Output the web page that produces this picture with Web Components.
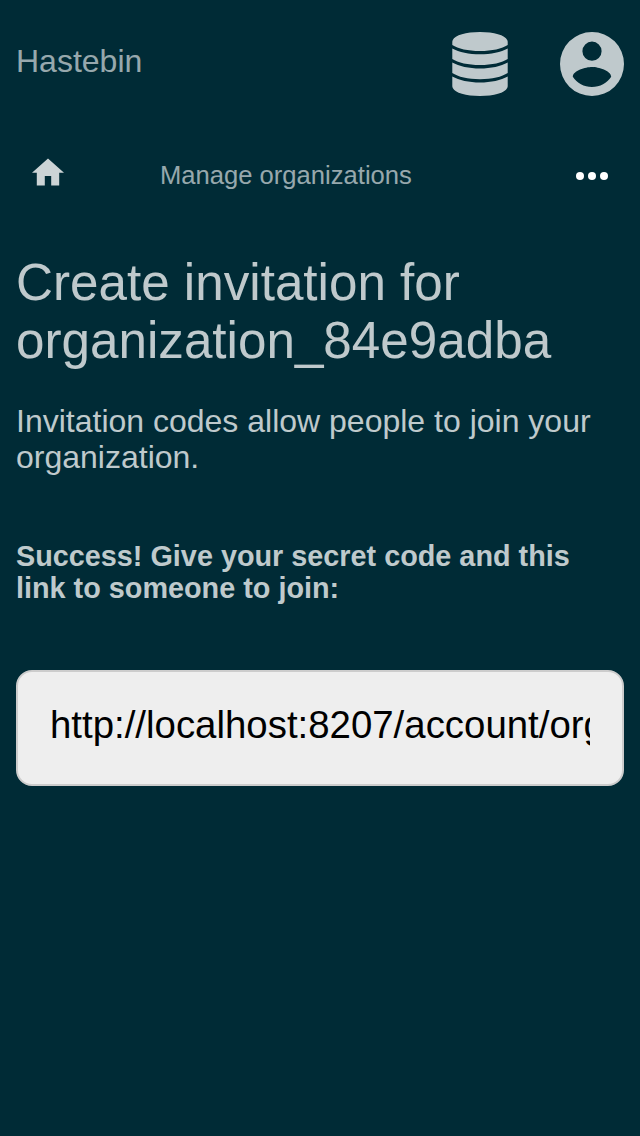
<!DOCTYPE html>
<html lang="en">
<head>
<meta charset="utf-8">
<title>Hastebin</title>
<style>
html, body { margin: 0; background: #002b36; }
body { font-family: "Liberation Sans", Arial, sans-serif; color: rgba(255,255,255,.75); }
</style>
</head>
<body>
<hb-app></hb-app>
<script>
function define(name, html) {
  const template = document.createElement('template');
  template.innerHTML = html;
  customElements.define(name, class extends HTMLElement {
    constructor() {
      super();
      this.attachShadow({ mode: 'open' }).append(template.content.cloneNode(true));
    }
  });
}

define('hb-header', `
<style>
:host { display: flex; height: 128px; padding: 0 16px; box-sizing: border-box; align-items: center; justify-content: space-between; }
.brand { font-size: 32px; line-height: 36px; color: rgba(255,255,255,.6); padding-bottom: 6px; }
.icons { display: flex; gap: 52px; }
svg { display: block; fill: rgba(255,255,255,.75); }
</style>
<div class="brand"><slot></slot></div>
<div class="icons">
  <svg width="56" height="64" viewBox="0 0 56 64" aria-hidden="true">
    <path d="M28 0C14 0 3 3.2 .8 8Q.3 9 .3 10V13C6 16.8 16 19 28 19S50 16.8 55.7 13V10Q55.7 9 55.2 8C53 3.2 42 0 28 0Z"/>
    <path d="M.3 16.4C7 20.2 17 22.2 28 22.2S49 20.2 55.7 16.4V27C50 30.8 40 33 28 33S6 30.8 .3 27Z"/>
    <path d="M.3 30.4C7 34.2 17 36.4 28 36.4S49 34.2 55.7 30.4V41C50 44.8 40 47.2 28 47.2S6 44.8 .3 41Z"/>
    <path d="M.3 44.6C7 48.4 17 50.6 28 50.6S49 48.4 55.7 44.6V54Q55.7 55 55.2 56C53 60.8 42 64 28 64S3 60.8 .8 56Q.3 55 .3 54Z"/>
  </svg>
  <svg width="64" height="64" viewBox="0 0 64 64" aria-hidden="true">
    <path fill-rule="evenodd" d="M32 0a32 32 0 1 0 0 64a32 32 0 1 0 0-64ZM32 9.6a9.6 9.6 0 1 1 0 19.2a9.6 9.6 0 1 1 0-19.2ZM32 55.04c-8 0-15.07-4.1-19.2-10.3c.1-6.37 12.8-9.86 19.2-9.86s19.1 3.49 19.2 9.86c-4.13 6.2-11.2 10.3-19.2 10.3Z"/>
  </svg>
</div>`);

define('hb-nav', `
<style>
:host { display: grid; grid-template-columns: 96px 1fr auto; align-items: center; height: 96px; padding: 0 32px; box-sizing: border-box; }
svg { display: block; }
.title { padding: 0 0 2px 32px; font-size: 25.6px; line-height: 30px; color: rgba(255,255,255,.6); }
.home { padding-bottom: 8px; fill: rgba(255,255,255,.8); }
</style>
<svg class="home" width="32" height="28" viewBox="0 0 32 28" aria-hidden="true"><path d="M16 .5L0 14.8H4.8V27.5H12.8V18H19.2V27.5H27.2V14.8H32Z"/></svg>
<div class="title"><slot></slot></div>
<svg width="32" height="8" viewBox="0 0 32 8" fill="#fff" aria-hidden="true"><circle cx="4" cy="4" r="4"/><circle cx="16" cy="4" r="4"/><circle cx="28" cy="4" r="4"/></svg>`);

define('hb-link-field', `
<style>
:host { display: block; height: 116px; box-sizing: border-box; border: 2px solid #ccc; border-radius: 16px; background: #eee; padding: 31px 32px; color: #000; }
.value { font-size: 38.4px; line-height: 44px; height: 48px; overflow: hidden; white-space: nowrap; }
</style>
<div class="value"><slot></slot></div>`);

define('hb-invitation', `
<style>
:host { display: block; padding: 30px 16px 0; }
h1 { margin: 0; font-size: 51.2px; line-height: 58px; font-weight: 400; }
p { margin: 33px 0 0; font-size: 32px; line-height: 36px; }
strong { display: block; margin: 65px 0 66px; font-size: 28.8px; line-height: 32px; }
</style>
<h1>Create invitation for organization_84e9adba</h1>
<p>Invitation codes allow people to join your organization.</p>
<strong>Success! Give your secret code and this link to someone to join:</strong>
<hb-link-field>http://localhost:8207/account/org</hb-link-field>`);

define('hb-app', `
<style>:host { display: flex; flex-direction: column; min-height: 1136px; background: #002b36; }</style>
<hb-header>Hastebin</hb-header>
<hb-nav>Manage organizations</hb-nav>
<hb-invitation></hb-invitation>`);
</script>
</body>
</html>
